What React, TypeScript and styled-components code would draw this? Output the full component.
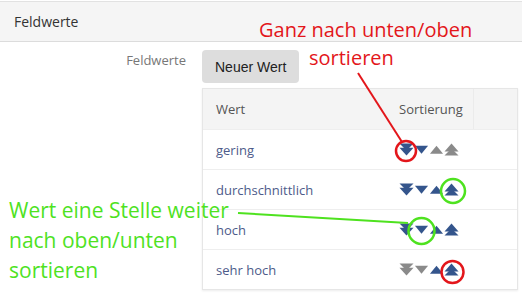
import React from "react";
import styled, { createGlobalStyle } from "styled-components";

const GlobalStyle = createGlobalStyle`
  html, body {
    margin: 0;
    padding: 0;
    background: #fff;
    font-family: "Open Sans", "Liberation Sans", sans-serif;
  }
`;

const BLUE = "#34558c";
const GRAY = "#8a8a8a";

type Dir = "top" | "down" | "up" | "bottom";

const rows: { label: string; active: Dir[] }[] = [
  { label: "gering", active: ["bottom", "down"] },
  { label: "durchschnittlich", active: ["bottom", "down", "up", "top"] },
  { label: "hoch", active: ["bottom", "down", "up", "top"] },
  { label: "sehr hoch", active: ["up", "top"] }
];

const Page = styled.div`
  position: relative;
  width: 522px;
  height: 297px;
  overflow: hidden;
`;

const PanelHeader = styled.div`
  margin-top: 1px;
  height: 39px;
  display: flex;
  align-items: center;
  padding-left: 14px;
  background: #f5f5f5;
  border-top: 1px solid #e2e2e2;
  border-bottom: 1px solid #dcdcdc;
  font-size: 14px;
  color: #333;
`;

const FormRow = styled.div`
  display: grid;
  grid-template-columns: 186px 1fr;
  column-gap: 16px;
  padding-top: 8px;
`;

const Label = styled.div`
  text-align: right;
  font-size: 13px;
  color: #777;
  padding-top: 1px;
`;

const Content = styled.div`
  display: flex;
  flex-direction: column;
  align-items: flex-start;
`;

const Button = styled.button`
  height: 33px;
  padding: 0 13px;
  border: none;
  border-radius: 4px;
  background: #dddddd;
  font-family: "Liberation Sans", Arial, sans-serif;
  font-size: 14px;
  color: #222;
`;

const Table = styled.div`
  margin-top: 5px;
  width: 314px;
  border: 1px solid #e6e6e6;
  box-shadow: 0 1px 2px rgba(0, 0, 0, 0.08);
`;

const Row = styled.div<{ $head?: boolean }>`
  display: grid;
  grid-template-columns: 183px 88px 1fr;
  height: 40px;
  background: ${(p) => (p.$head ? "#f4f4f4" : "#fff")};
  border-top: ${(p) => (p.$head ? "none" : "1px solid #eeeeee")};
  box-sizing: border-box;
`;

const Cell = styled.div<{ $head?: boolean; $divider?: boolean }>`
  display: flex;
  align-items: center;
  padding-left: 13px;
  font-size: 13px;
  color: ${(p) => (p.$head ? "#555" : "#4d5b8a")};
  border-right: ${(p) => (p.$divider ? "1px solid #ebebeb" : "none")};
`;

const Note = styled.div<{ $color: string; $size: number; $lh: number }>`
  position: absolute;
  font-size: ${(p) => p.$size}px;
  line-height: ${(p) => p.$lh}px;
  color: ${(p) => p.$color};
  white-space: nowrap;
`;

const Line = styled.div<{ $indent?: number }>`
  padding-left: ${(p) => p.$indent ?? 0}px;
`;

const Overlay = styled.svg`
  position: absolute;
  left: 0;
  top: 0;
  pointer-events: none;
`;

function SortIcon({ dir, on }: { dir: Dir; on: boolean }) {
  const fill = on ? BLUE : GRAY;
  const shapes: Record<Dir, string[]> = {
    bottom: ["0.5,1 15.5,1 8,8.5", "0.5,5.5 15.5,5.5 8,14"],
    down: ["1,3.5 15,3.5 8,12"],
    up: ["1,12 15,12 8,3.5"],
    top: ["0.5,14 15.5,14 8,6.5", "0.5,9.5 15.5,9.5 8,1"]
  };
  return (
    <svg width="15" height="15" viewBox="0 0 16 15">
      {shapes[dir].map((pts, i) => (
        <polygon key={i} points={pts} fill={fill} />
      ))}
    </svg>
  );
}

const order: Dir[] = ["bottom", "down", "up", "top"];

export default function App() {
  return (
    <Page>
      <GlobalStyle />
      <PanelHeader>Feldwerte</PanelHeader>
      <FormRow>
        <Label>Feldwerte</Label>
        <Content>
          <Button>Neuer Wert</Button>
          <Table>
            <Row $head>
              <Cell $head>Wert</Cell>
              <Cell $head $divider>Sortierung</Cell>
              <Cell $head />
            </Row>
            {rows.map((r) => (
              <Row key={r.label}>
                <Cell>{r.label}</Cell>
                <Cell>
                  {order.map((d) => (
                    <SortIcon key={d} dir={d} on={r.active.includes(d)} />
                  ))}
                </Cell>
                <Cell />
              </Row>
            ))}
          </Table>
        </Content>
      </FormRow>

      <Note $color="#e3161b" $size={20} $lh={28} style={{ left: 259, top: 16 }}>
        <Line>Ganz nach unten/oben</Line>
        <Line $indent={50}>sortieren</Line>
      </Note>
      <Note $color="#4ee21f" $size={21} $lh={30} style={{ left: 9, top: 195 }}>
        <Line>Wert eine Stelle weiter</Line>
        <Line>nach oben/unten</Line>
        <Line>sortieren</Line>
      </Note>

      <Overlay width="522" height="297">
        <line x1="358" y1="73" x2="402" y2="142" stroke="#e3161b" strokeWidth="2" />
        <circle cx="406" cy="151" r="10" fill="none" stroke="#e3161b" strokeWidth="2.5" />
        <circle cx="452.5" cy="272" r="11" fill="none" stroke="#e3161b" strokeWidth="2.5" />
        <line x1="238" y1="213" x2="408" y2="223" stroke="#4ee21f" strokeWidth="2" />
        <circle cx="453" cy="191" r="12" fill="none" stroke="#4ee21f" strokeWidth="2.5" />
        <circle cx="421.5" cy="231" r="13" fill="none" stroke="#4ee21f" strokeWidth="2.5" />
      </Overlay>
    </Page>
  );
}
